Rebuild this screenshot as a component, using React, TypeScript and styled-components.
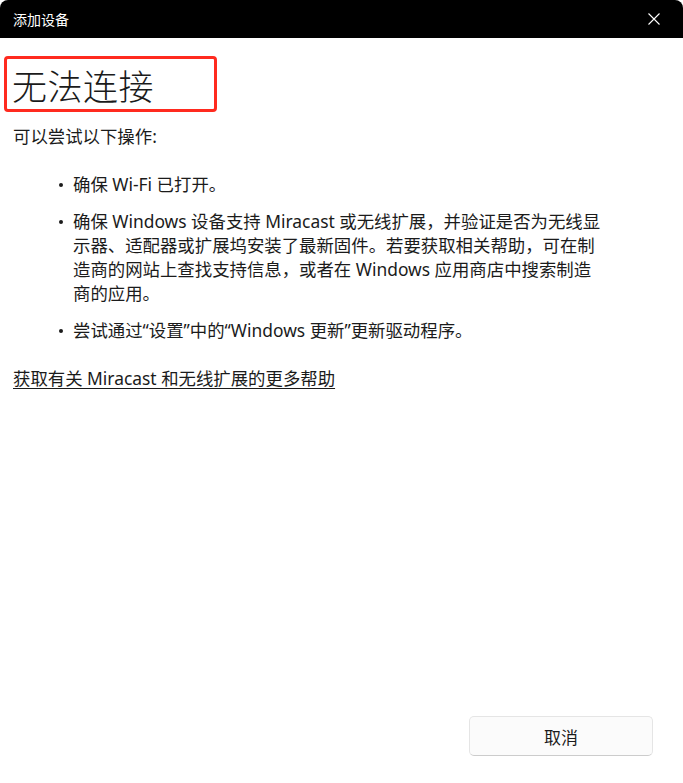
import React from 'react';
import styled, { createGlobalStyle } from 'styled-components';

const GlobalStyle = createGlobalStyle`
  html, body, #root {
    margin: 0;
    padding: 0;
    height: 100%;
    background: #ffffff;
  }
  body {
    font-family: "Noto Sans", "Noto Sans CJK SC", sans-serif;
    color: #1b1b1b;
  }
`;

const Dialog = styled.div`
  height: 100vh;
  display: flex;
  flex-direction: column;
  background: #ffffff;
`;

const TitleBar = styled.header`
  height: 38px;
  flex: none;
  display: flex;
  align-items: center;
  justify-content: space-between;
  padding: 0 17px 0 13px;
  background: #000000;
  border-radius: 8px 8px 0 0;
  color: #ffffff;
  font-size: 14px;
`;

const CloseButton = styled.button`
  width: 24px;
  height: 24px;
  display: flex;
  align-items: center;
  justify-content: center;
  padding: 0;
  background: transparent;
  border: none;
  cursor: pointer;
`;

const Body = styled.main`
  flex: 1;
  display: flex;
  flex-direction: column;
  padding: 18px 0 0 13px;
  font-size: 17.4px;
  line-height: 24px;
`;

const Heading = styled.h1`
  align-self: flex-start;
  box-sizing: border-box;
  width: 213px;
  height: 56px;
  margin: 0 0 12px -9px;
  padding: 0 0 0 5px;
  display: flex;
  align-items: center;
  border: 3px solid #ff2a1f;
  border-radius: 4px;
  font-family: "Noto Sans CJK SC", sans-serif;
  font-size: 35px;
  font-weight: 300;
  line-height: 1;
  letter-spacing: 0.5px;
  color: #1b1b1b;
`;

const Intro = styled.p`
  margin: 0;
`;

const Steps = styled.ul`
  list-style: none;
  margin: 24px 0 0;
  padding: 0 0 0 46px;
  display: flex;
  flex-direction: column;
  gap: 13px;
`;

const Step = styled.li`
  display: flex;
  align-items: flex-start;
`;

const Dot = styled.span`
  width: 4px;
  height: 4px;
  flex: none;
  margin: 11px 10px 0 0;
  border-radius: 50%;
  background: #1b1b1b;
`;

const StepText = styled.span`
  white-space: nowrap;
`;

const HelpLink = styled.a`
  align-self: flex-start;
  margin-top: 24px;
  color: #1b1b1b;
  text-decoration: underline;
  text-underline-offset: 3px;
`;

const Footer = styled.footer`
  margin-top: auto;
  display: flex;
  justify-content: flex-end;
  padding: 0 30px 27px 0;
`;

const CancelButton = styled.button`
  width: 184px;
  height: 40px;
  background: #fbfbfb;
  border: 1px solid #e5e5e5;
  border-bottom-color: #cccccc;
  border-radius: 5px;
  font-family: inherit;
  font-size: 17px;
  color: #1b1b1b;
`;

// each entry is a step; inner arrays are the wrapped lines as the dialog shows them
const steps: string[][] = [
  ['确保 Wi-Fi 已打开。'],
  [
    '确保 Windows 设备支持 Miracast 或无线扩展，并验证是否为无线显',
    '示器、适配器或扩展坞安装了最新固件。若要获取相关帮助，可在制',
    '造商的网站上查找支持信息，或者在 Windows 应用商店中搜索制造',
    '商的应用。',
  ],
  ['尝试通过“设置”中的“Windows 更新”更新驱动程序。'],
];

const App: React.FC = () => (
  <>
    <GlobalStyle />
    <Dialog>
      <TitleBar>
        <span>添加设备</span>
        <CloseButton aria-label="关闭">
          <svg width="12" height="12" viewBox="0 0 12 12">
            <path d="M0.5 0.5 L11.5 11.5 M11.5 0.5 L0.5 11.5" stroke="#ffffff" strokeWidth="1.1" />
          </svg>
        </CloseButton>
      </TitleBar>
      <Body>
        <Heading>无法连接</Heading>
        <Intro>可以尝试以下操作:</Intro>
        <Steps>
          {steps.map((lines) => (
            <Step key={lines[0]}>
              <Dot />
              <StepText>
                {lines.map((l, i) => (
                  <React.Fragment key={l}>
                    {i > 0 && <br />}
                    {l}
                  </React.Fragment>
                ))}
              </StepText>
            </Step>
          ))}
        </Steps>
        <HelpLink href="#">获取有关 Miracast 和无线扩展的更多帮助</HelpLink>
      </Body>
      <Footer>
        <CancelButton>取消</CancelButton>
      </Footer>
    </Dialog>
  </>
);

export default App;
